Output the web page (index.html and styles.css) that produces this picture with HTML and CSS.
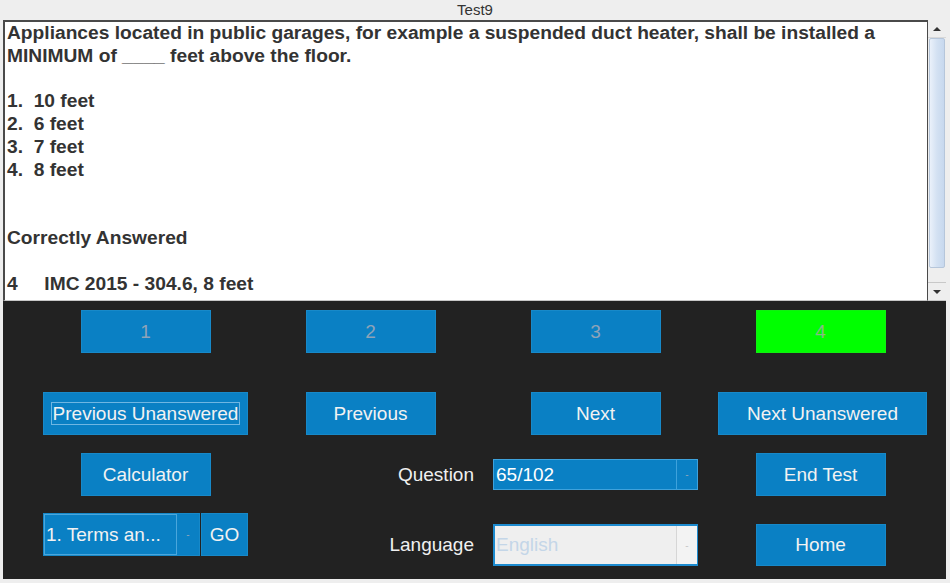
FILE: index.html
```html
<!DOCTYPE html>
<html>
<head>
<meta charset="utf-8">
<title>Test9</title>
<link rel="stylesheet" href="styles.css">
</head>
<body>
<div class="window">
  <div class="titlebar">Test9</div>
  <div class="content">
    <div class="textpane">
      <div class="textarea">
        <div class="line">Appliances located in public garages, for example a suspended duct heater, shall be installed a MINIMUM of ____ feet above the floor.</div>
        <div class="line">&nbsp;</div>
        <div class="line">1.  10 feet</div>
        <div class="line">2.  6 feet</div>
        <div class="line">3.  7 feet</div>
        <div class="line">4.  8 feet</div>
        <div class="line">&nbsp;</div>
        <div class="line">&nbsp;</div>
        <div class="line">Correctly Answered</div>
        <div class="line">&nbsp;</div>
        <div class="line">4     IMC 2015 - 304.6, 8 feet</div>
      </div>
      <div class="scrollbar">
        <div class="sb-btn"><span class="arrow-up"></span></div>
        <div class="sb-thumb"></div>
        <div class="sb-track"></div>
        <div class="sb-btn sb-down"><span class="arrow-down"></span></div>
      </div>
    </div>
    <div class="panel">
      <div class="row row1">
        <div class="btn w130 disabled">1</div>
        <div class="btn w130 disabled">2</div>
        <div class="btn w130 disabled">3</div>
        <div class="btn w130 current">4</div>
      </div>
      <div class="row row2">
        <div class="btn w205"><span class="focus">Previous Unanswered</span></div>
        <div class="btn w130">Previous</div>
        <div class="btn w130">Next</div>
        <div class="btn w209">Next Unanswered</div>
      </div>
      <div class="row row3">
        <div class="btn w130">Calculator</div>
        <div class="label">Question</div>
        <div class="combo combo-q">
          <div class="combo-field">65/102</div>
          <div class="combo-arrow">-</div>
        </div>
        <div class="btn w130">End Test</div>
      </div>
      <div class="row row4">
        <div class="terms">
          <div class="terms-combo">
            <div class="terms-field">1. Terms an...</div>
            <div class="terms-arrow">-</div>
          </div>
          <div class="btn go">GO</div>
        </div>
        <div class="label label-end">Language</div>
        <div class="combo combo-l">
          <div class="combo-field">English</div>
          <div class="combo-arrow">-</div>
        </div>
        <div class="btn w130 home">Home</div>
      </div>
    </div>
  </div>
</div>
</body>
</html>
```

FILE: styles.css
```css
html, body {
  margin: 0;
  padding: 0;
}
body {
  background: #eeeeee;
  font-family: "Liberation Sans", Arial, sans-serif;
  width: 950px;
  height: 583px;
  overflow: hidden;
}
.titlebar {
  height: 20px;
  line-height: 20px;
  text-align: center;
  font-size: 15px;
  color: #333333;
}
.content {
  margin: 0 4px 0 3px;
}
.textpane {
  display: flex;
  height: 281px;
}
.textarea {
  flex: 1;
  background: #ffffff;
  border: 2px solid #4a4a4a;
  border-right-width: 1px;
  border-bottom: 1px solid #c8c8c8;
  padding: 0 0 0 2px;
  font-size: 19.2px;
  font-weight: bold;
  line-height: 22.8px;
  color: #333333;
  overflow: hidden;
}
.line {
  white-space: pre-wrap;
}
.scrollbar {
  width: 18px;
  display: flex;
  flex-direction: column;
  background: #eeeeee;
  border-bottom: 1px solid #c8c8c8;
}
.sb-btn {
  height: 17px;
  display: flex;
  align-items: center;
  justify-content: center;
  background: #eeeeee;
  border-bottom: 1px solid #d8d8d8;
}
.sb-down {
  border-bottom: none;
  border-top: 1px solid #c8c8c8;
}
.arrow-up {
  width: 0;
  height: 0;
  border-left: 4px solid transparent;
  border-right: 4px solid transparent;
  border-bottom: 4px solid #333;
}
.arrow-down {
  width: 0;
  height: 0;
  border-left: 4px solid transparent;
  border-right: 4px solid transparent;
  border-top: 4px solid #333;
}
.sb-thumb {
  height: 230px;
  margin: 0 1px 0 1px;
  background: linear-gradient(to right, #eaf1fa, #d3e1f2 50%, #c7d8ee);
  border: 1px solid #b6c6da;
  border-radius: 2px;
  box-sizing: border-box;
}
.sb-track {
  flex: 1;
  background: #eeeeee;
}
.panel {
  height: 278px;
  background: #222222;
  padding: 9px 13px 0 30px;
  box-sizing: border-box;
  display: flex;
  flex-direction: column;
}
.row {
  display: grid;
  grid-template-columns: repeat(4, 225px);
  height: 43px;
  align-items: center;
  justify-items: center;
}
.row1 { margin-bottom: 39px; }
.row2 { margin-bottom: 18px; }
.row3 { margin-bottom: 17px; }
.row4 { height: 53px; align-items: end; }
.btn {
  height: 43px;
  box-sizing: border-box;
  background: #0a80c4;
  border: 1px solid #1789c9;
  color: #f2f2f2;
  font-size: 19px;
  display: flex;
  align-items: center;
  justify-content: center;
}
.w130 { width: 130px; }
.w205 { width: 205px; }
.w209 { width: 209px; margin-left: 4px; }
.disabled { color: #8ea3b8; }
.current {
  background: #00ff00;
  border-color: #10f010;
  color: #86b886;
}
.focus {
  border: 1px solid #6fb6e2;
  padding: 1px 1px 0 1px;
  line-height: 20px;
}
.label {
  justify-self: end;
  padding-right: 9px;
  color: #f0f0f0;
  font-size: 19px;
}
.label-end {
  height: 42px;
  display: flex;
  align-items: center;
}
.combo {
  width: 205px;
  display: flex;
  box-sizing: border-box;
}
.combo-q {
  height: 31px;
  background: #0a80c4;
  border: 1px solid #3ea2dc;
}
.combo-q .combo-field {
  flex: 1;
  color: #ffffff;
  font-size: 19px;
  line-height: 29px;
  padding-left: 2px;
  border-right: 1px solid #3ea2dc;
}
.combo-arrow {
  width: 20px;
  display: flex;
  align-items: center;
  justify-content: center;
  font-size: 10px;
  color: #8aa6bd;
}
.combo-l {
  height: 42px;
  background: #efefef;
  border: 2px solid #1d8bcf;
  border-right: 1px solid #1d8bcf;
}
.combo-l .combo-field {
  flex: 1;
  color: #c4d6e8;
  font-size: 19px;
  line-height: 38px;
  padding-left: 1px;
  border-right: 1px solid #d6d6d6;
}
.combo-l .combo-arrow {
  background: #f3f3f3;
  color: #c8c8c8;
}
.home { height: 42px; }
.terms {
  width: 205px;
  height: 43px;
  display: flex;
  align-self: start;
  gap: 1px;
}
.terms-combo {
  width: 157px;
  display: flex;
  background: #0a80c4;
  border: 1px solid #1789c9;
  box-sizing: border-box;
}
.terms-field {
  width: 133px;
  box-sizing: border-box;
  border: 1px solid #4aa6dc;
  color: #f2f2f2;
  font-size: 19px;
  line-height: 39px;
  padding-left: 1px;
  white-space: nowrap;
  overflow: hidden;
}
.terms-arrow {
  flex: 1;
  display: flex;
  align-items: center;
  justify-content: center;
  font-size: 10px;
  color: #8aa6bd;
}
.go {
  width: 47px;
}
```
